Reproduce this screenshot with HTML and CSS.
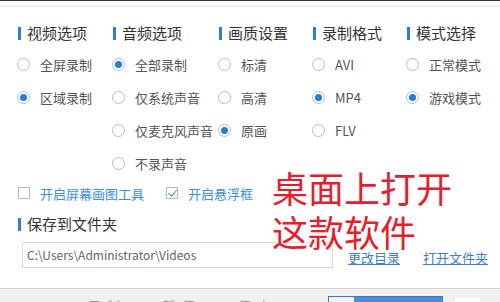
FILE: index.html
```html
<!DOCTYPE html>
<html lang="zh-CN">
<head>
	<meta charset="UTF-8">
	<title>录制设置</title>
	<link rel="stylesheet" href="styles.css">
</head>
<body>
<div class="window">
	<div class="topline"></div>
	<div class="main">
		<div class="cols">
			<div class="col">
				<h3 class="title">视频选项</h3>
				<label class="opt"><i class="radio"></i>全屏录制</label>
				<label class="opt"><i class="radio on"></i>区域录制</label>
			</div>
			<div class="col">
				<h3 class="title">音频选项</h3>
				<label class="opt"><i class="radio on"></i>全部录制</label>
				<label class="opt"><i class="radio"></i>仅系统声音</label>
				<label class="opt"><i class="radio"></i>仅麦克风声音</label>
				<label class="opt"><i class="radio"></i>不录声音</label>
			</div>
			<div class="col">
				<h3 class="title">画质设置</h3>
				<label class="opt"><i class="radio"></i>标清</label>
				<label class="opt"><i class="radio"></i>高清</label>
				<label class="opt"><i class="radio on"></i>原画</label>
			</div>
			<div class="col">
				<h3 class="title">录制格式</h3>
				<label class="opt"><i class="radio"></i>AVI</label>
				<label class="opt"><i class="radio on"></i>MP4</label>
				<label class="opt"><i class="radio"></i>FLV</label>
			</div>
			<div class="col">
				<h3 class="title">模式选择</h3>
				<label class="opt"><i class="radio"></i>正常模式</label>
				<label class="opt"><i class="radio on"></i>游戏模式</label>
			</div>
		</div>
		<div class="checks">
			<label class="chk"><i class="box"></i>开启屏幕画图工具</label>
			<label class="chk"><i class="box on"></i>开启悬浮框</label>
		</div>
		<h3 class="title">保存到文件夹</h3>
		<div class="save">
			<div class="path">C:\Users\Administrator\Videos</div>
			<a class="link first" href="#">更改目录</a>
			<a class="link" href="#">打开文件夹</a>
		</div>
	</div>
	<div class="footer">
		<span class="foot-text">录制 · 暂停 · 停止</span>
		<span class="foot-btn"><i></i></span>
		<span class="foot-box"></span>
	</div>
	<div class="overlay">桌面上打开<br>这款软件</div>
</div>
</body>
</html>
```

FILE: styles.css
```css
*{
	margin:0;
	padding:0;
	box-sizing:border-box;
}

body{
	width:500px;
	height:302px;
	overflow:hidden;
	background:#fff;
	font-family:"Microsoft YaHei","Noto Sans CJK SC","Noto Sans",sans-serif;
	color:#333;
}

.window{
	position:relative;
	height:302px;
}

.topline{
	height:7px;
	border-top:1px solid #2e3338;
	border-bottom:2px solid #eef3f9;
}

.main{
	padding:17px 0 0 18px;
	height:281px;
}

.cols{
	display:grid;
	grid-template-columns:95px 106px 94px 94px 1fr;
}

.title{
	display:flex;
	align-items:center;
	height:18px;
	font-size:15px;
	font-weight:normal;
	color:#333;
	line-height:18px;
}

.title::before{
	content:"";
	width:3px;
	height:13px;
	margin-right:6px;
	background:#2d7fd8;
}

.col .title{
	margin-bottom:6px;
}

.opt{
	display:flex;
	align-items:center;
	height:33px;
	font-size:13px;
	color:#555;
	white-space:nowrap;
}

.radio{
	width:13px;
	height:13px;
	margin:0 10px 0 -1px;
	border:1px solid #bcbcbc;
	border-radius:50%;
	background:#fff;
	position:relative;
	flex:none;
}

.radio.on{
	border-color:#9cc3ec;
}

.radio.on::after{
	content:"";
	position:absolute;
	left:2px;
	top:2px;
	width:7px;
	height:7px;
	border-radius:50%;
	background:#2b7bd6;
}

.checks{
	display:flex;
	gap:22px;
	height:34px;
	align-items:center;
	margin-top:-4px;
}

.chk{
	display:flex;
	align-items:center;
	font-size:13px;
	color:#3a8ee6;
}

.box{
	width:12px;
	height:12px;
	margin-right:10px;
	border:1px solid #b8b8b8;
	background:#fff;
	position:relative;
}

.box.on::after{
	content:"";
	position:absolute;
	left:3px;
	top:0;
	width:4px;
	height:7px;
	border:solid #3aa53a;
	border-width:0 1.5px 1.5px 0;
	transform:rotate(40deg);
}

.checks + .title{
	margin-top:5px;
}

.save{
	display:flex;
	align-items:center;
	margin:9px 0 0 4px;
}

.path{
	width:311px;
	height:26px;
	padding-left:4px;
	border:1px solid #dcdcdc;
	font-size:12px;
	line-height:24px;
	color:#666;
	white-space:nowrap;
	overflow:hidden;
}

.link{
	margin-left:23px;
	margin-top:4px;
	font-size:13px;
	color:#3f7fc8;
	text-decoration:underline;
}

.link.first{
	margin-left:15px;
}

.footer{
	position:relative;
	height:14px;
	border-top:1px solid #d2d2d2;
	background:#f0f0f0;
}

.foot-text{
	position:absolute;
	left:88px;
	top:7px;
	font-size:13px;
	letter-spacing:6px;
	color:#999;
}

.foot-btn{
	position:absolute;
	left:328px;
	top:7px;
	width:115px;
	height:10px;
	background:#4a90d9;
	border:1px solid #3a78bb;
}

.foot-btn i{
	display:block;
	width:25px;
	height:9px;
	background:#eaf2fb;
}

.foot-box{
	position:absolute;
	left:455px;
	top:9px;
	width:25px;
	height:8px;
	background:#fff;
}

.overlay{
	position:absolute;
	left:272px;
	top:165px;
	font-size:36px;
	line-height:44px;
	color:#e5202e;
	text-shadow:0 0 2px #fff;
	white-space:nowrap;
}
```
